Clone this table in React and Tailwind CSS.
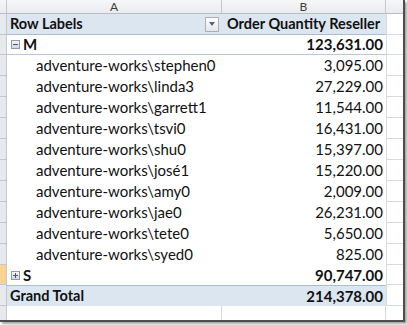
import React from 'react';

const font = { fontFamily: 'Lato, "Open Sans", sans-serif' };

const users = [
  ['adventure-works\\stephen0', '3,095.00'],
  ['adventure-works\\linda3', '27,229.00'],
  ['adventure-works\\garrett1', '11,544.00'],
  ['adventure-works\\tsvi0', '16,431.00'],
  ['adventure-works\\shu0', '15,397.00'],
  ['adventure-works\\josé1', '15,220.00'],
  ['adventure-works\\amy0', '2,009.00'],
  ['adventure-works\\jae0', '26,231.00'],
  ['adventure-works\\tete0', '5,650.00'],
  ['adventure-works\\syed0', '825.00'],
];

// small +/- box next to a row field item
const Toggle = ({ open }) => (
  <span className="relative mr-[3px] inline-block h-[9px] w-[9px] border border-[#8e9bb0] bg-gradient-to-b from-[#f4f6f9] to-[#cfd6e0]">
    <span className="absolute left-[1px] top-[3px] h-[1px] w-[5px] bg-[#4a5566]" />
    {!open && <span className="absolute left-[3px] top-[1px] h-[5px] w-[1px] bg-[#4a5566]" />}
  </span>
);

// one sheet row: row header strip | pivot cells | column C
const Row = ({ h, strip = 'bg-[#e6e9ee]', line = '', bg = 'bg-white', left, right, rightClass = 'justify-end pr-[3px]' }) => (
  <div className={`flex ${h}`}>
    <div className={`w-[7px] shrink-0 border-b border-r border-[#c3c8d0] ${strip}`} />
    <div className={`flex w-[379px] shrink-0 items-center ${bg} ${line}`}>
      <div className="flex w-[215px] shrink-0 items-center">{left}</div>
      <div className={`flex w-[164px] shrink-0 items-center ${rightClass}`}>{right}</div>
    </div>
    <div className="w-[17px] shrink-0 border-b border-l border-[#d6d9de] bg-white" />
  </div>
);

export default function App() {
  return (
    <div className="h-[325px] w-[407px] overflow-hidden bg-white" style={font}>
      <div className="h-[322px] w-[405px] border-b-2 border-r-2 border-[#4d4d4d] shadow-[2px_2px_2px_rgba(0,0,0,0.35)]">
        {/* column headers */}
        <div className="flex h-[14px] border-b border-[#b9bec6] bg-gradient-to-b from-[#f6f7f9] to-[#e9ebee] text-[12px] leading-none text-[#3c3c3c]">
          <div className="w-[7px] shrink-0 border-r border-[#c3c8d0]" />
          <div className="flex w-[215px] shrink-0 items-center justify-center border-r border-[#c3c8d0]">A</div>
          <div className="flex w-[164px] shrink-0 items-center justify-center border-r border-[#c3c8d0]">B</div>
          <div className="w-[17px] shrink-0" />
        </div>

        <div className="text-[15px] text-[#111]">
          <Row
            h="h-[21px]"
            bg="bg-[#dce6f1]"
            line="border-b border-[#a9bdd6]"
            left={
              <div className="flex w-full items-center justify-between pl-[3px] pr-[3px]">
                <span className="text-[14.5px] font-bold">Row Labels</span>
                <span className="flex h-[15px] w-[14px] items-center justify-center border border-[#a9b0ba] bg-gradient-to-b from-white to-[#e3e6ea]">
                  <span className="h-0 w-0 border-l-[3px] border-r-[3px] border-t-[4px] border-l-transparent border-r-transparent border-t-[#5c6370]" />
                </span>
              </div>
            }
            rightClass="pl-[5px]"
            right={<span className="text-[14.5px] font-bold">Order Quantity Reseller</span>}
          />
          <Row
            h="h-[20px]"
            line="border-b border-[#b7c8dc]"
            left={<div className="flex items-center pl-[4px] font-bold"><Toggle open />M</div>}
            right={<span className="font-bold">123,631.00</span>}
          />
          {users.map(([name, qty]) => (
            <Row key={name} h="h-[21px]" left={<span className="pl-[29px]">{name}</span>} right={<span>{qty}</span>} />
          ))}
          <Row
            h="h-[20px]"
            strip="bg-[#f7d48f]"
            left={<div className="flex items-center pl-[4px] font-bold"><Toggle />S</div>}
            right={<span className="font-bold">90,747.00</span>}
          />
          <Row
            h="h-[21px]"
            bg="bg-[#dce6f1]"
            line="border-t border-[#a9bdd6]"
            left={<span className="pl-[3px] text-[14.5px] font-bold">Grand Total</span>}
            right={<span className="font-bold">214,378.00</span>}
          />
          {/* empty sheet row */}
          <div className="flex h-[14px]">
            <div className="w-[7px] shrink-0 border-r border-[#c3c8d0] bg-[#e6e9ee]" />
            <div className="w-[215px] shrink-0 border-r border-[#d6d9de]" />
            <div className="w-[164px] shrink-0 border-r border-[#d6d9de]" />
            <div className="w-[17px] shrink-0" />
          </div>
        </div>
      </div>
    </div>
  );
}
